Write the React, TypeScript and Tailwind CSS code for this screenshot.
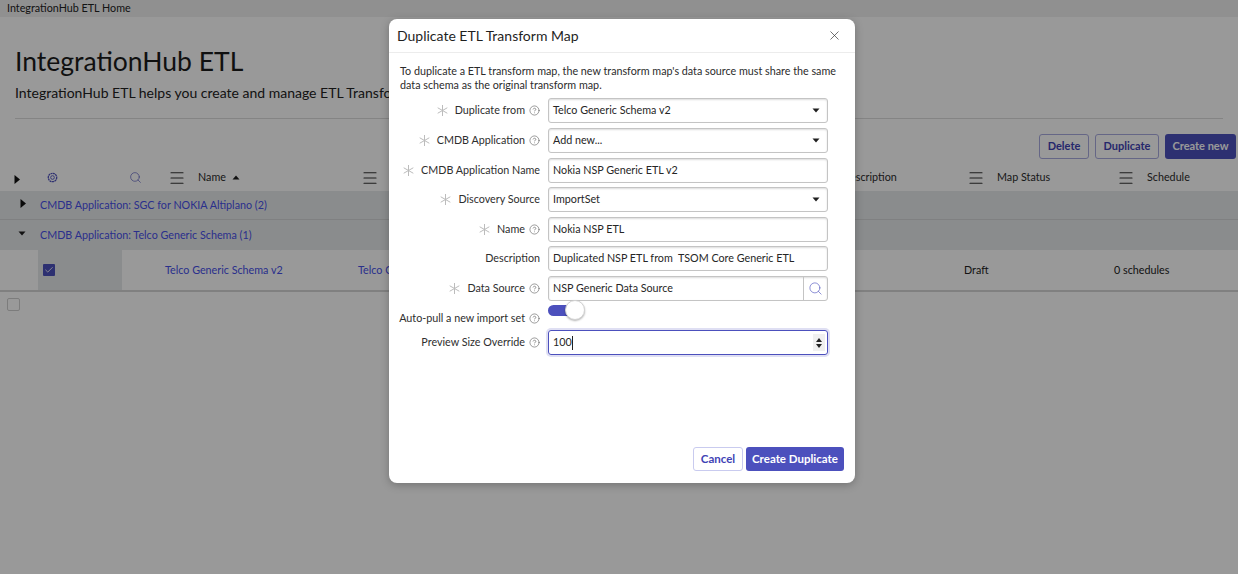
import { CircleHelp, Check, Menu, Search, X } from "lucide-react";
import type { ReactNode } from "react";

const Burger = () => <Menu size={18} strokeWidth={1.5} className="text-[#333]" />;

const Caret = ({ down = false }: { down?: boolean }) => (
  <svg width="8" height="5" viewBox="0 0 8 5" className={down ? "" : "rotate-180"}>
    <path d="M0.5 0.5h7L4 4.5z" fill="#1f1f1f" />
  </svg>
);

const SideArrow = () => (
  <svg width="6" height="9" viewBox="0 0 6 9">
    <path d="M0.5 0v9L6 4.5z" fill="#111" />
  </svg>
);

function Gear() {
  return (
    <svg width="11" height="11" viewBox="0 0 12 12" fill="none" stroke="#4f52bd" strokeWidth="1">
      <circle cx="6" cy="6" r="2" />
      <circle cx="6" cy="6" r="4.6" strokeDasharray="2.2 0.5" strokeWidth="1.4" />
    </svg>
  );
}

const Star = () => (
  <svg width="11" height="11" viewBox="0 0 11 11" stroke="#bcbcbc" strokeWidth="1" className="mr-[7px] shrink-0">
    <path d="M5.5 0v11M0.7 2.75l9.6 5.5M0.7 8.25l9.6-5.5" />
  </svg>
);

function Row({
  label,
  required,
  help,
  className,
  children,
}: {
  label: string;
  required?: boolean;
  help?: boolean;
  className: string;
  children: ReactNode;
}) {
  return (
    <div className={`flex items-center ${className}`}>
      <div className="w-[140px] h-full flex items-center justify-end shrink-0 text-[10.75px] text-[#2e2e2e] whitespace-nowrap">
        {required && <Star />}
        <span>{label}</span>
        {help && <CircleHelp size={11} strokeWidth={1.25} className="ml-[4px] text-[#555] shrink-0" />}
      </div>
      <div className="ml-[8px] w-[280px]">{children}</div>
    </div>
  );
}

function Field({ children, select }: { children?: ReactNode; select?: boolean }) {
  return (
    <div className="h-[25px] w-full flex items-center justify-between rounded-[3px] border border-[#c4c4c4] pl-[4px] pr-[7px] text-[10.75px] text-[#262626] bg-white shadow-[inset_0_1px_2px_rgba(0,0,0,0.14)]">
      <span className="whitespace-pre">{children}</span>
      {select && <Caret down />}
    </div>
  );
}

export default function App() {
  return (
    <div className="relative h-screen w-full overflow-hidden bg-white font-['Lato','Liberation_Sans',sans-serif] text-[#222]">
      {/* Page beneath the dialog */}
      <div className="h-[17px] bg-[#f0f0f0] flex items-center pl-[7px] text-[10.75px] text-[#222]">IntegrationHub ETL Home</div>
      <div className="px-[15px] pt-[24px]">
        <h1 className="text-[26.5px] leading-[40px] text-[#1c1c1c]">IntegrationHub ETL</h1>
        <p className="text-[14px] leading-[24px] whitespace-nowrap">IntegrationHub ETL helps you create and manage ETL Transform Maps</p>
      </div>
      <div className="mt-[13px] mx-[15px] border-t border-[#dcdcdc]" />
      <div className="mt-[15px] h-[25px] flex justify-end gap-[6px] pr-[2px] text-[11px] font-bold">
        <button className="w-[50px] rounded-[3px] border border-[#a9abe0] text-[#3f43b5]">Delete</button>
        <button className="w-[64px] rounded-[3px] border border-[#a9abe0] text-[#3f43b5]">Duplicate</button>
        <button className="w-[71px] rounded-[3px] bg-[#4c50bd] text-white">Create new</button>
      </div>
      <div className="h-[32px] pt-[5px] flex items-center text-[10.75px] text-[#2b2b2b]">
        <div className="w-[38px] pl-[14px] pt-[3px]"><SideArrow /></div>
        <div className="w-[84px] pl-[9px]"><Gear /></div>
        <div className="w-[43px] pl-[7px]"><Search size={13} strokeWidth={1.25} className="text-[#5a5dc0]" /></div>
        <div className="w-[193px] flex items-center pl-[3px]"><Burger /><span className="ml-[12px]">Name</span><span className="ml-[6px]"><Caret /></span></div>
        <div className="w-[193px] pl-[3px]"><Burger /></div>
        <div className="w-[258px]" />
        <div className="w-[155px] flex items-center pl-[3px]"><Burger /><span className="ml-[12px]">Description</span></div>
        <div className="w-[150px] flex items-center pl-[3px]"><Burger /><span className="ml-[12px]">Map Status</span></div>
        <div className="flex-1 flex items-center pl-[3px]"><Burger /><span className="ml-[12px]">Schedule</span></div>
      </div>
      <div className="h-[29px] bg-[#e6e9eb] border-b border-[#d4d6d8] flex items-center text-[10.75px] text-[#4650ea]">
        <div className="w-[40px] pl-[20px] pb-[3px]"><SideArrow /></div>
        <span>CMDB Application: SGC for NOKIA Altiplano (2)</span>
      </div>
      <div className="h-[30px] bg-[#e6e9eb] flex items-center text-[10.75px] text-[#4650ea]">
        <div className="w-[40px] pl-[18px] pb-[4px]"><Caret down /></div>
        <span>CMDB Application: Telco Generic Schema (1)</span>
      </div>
      <div className="h-[42px] flex items-stretch border-b-2 border-[#d6d6d6] text-[10.75px]">
        <div className="w-[38px]" />
        <div className="w-[84px] bg-[#e6e9eb] flex items-center pl-[5px]">
          <span className="w-[12px] h-[12px] rounded-[1px] bg-[#4c50bd] flex items-center justify-center">
            <Check size={10} strokeWidth={2} className="text-white" />
          </span>
        </div>
        <div className="w-[43px]" />
        <div className="w-[193px] flex items-center text-[#4650ea]">Telco Generic Schema v2</div>
        <div className="w-[193px] flex items-center text-[#4650ea]">Telco Generic Schema</div>
        <div className="w-[413px]" />
        <div className="w-[150px] flex items-center">Draft</div>
        <div className="flex-1 flex items-center">0 schedules</div>
      </div>
      <div className="mt-[6px] ml-[7px] w-[13px] h-[13px] rounded-[2px] border border-[#cfcfcf]" />

      {/* Scrim and dialog */}
      <div className="absolute inset-0 bg-black/40 flex items-start pt-[19px] pl-[389px]">
        <div className="w-[466px] h-[464px] rounded-[8px] bg-white shadow-[0_2px_8px_rgba(0,0,0,0.25)] flex flex-col">
          <div className="h-[34px] shrink-0 border-b border-[#ececec] flex items-center justify-between pl-[8px] pr-[13px]">
            <span className="text-[14px] text-[#1f1f1f]">Duplicate ETL Transform Map</span>
            <X size={15} strokeWidth={1.1} className="text-[#333]" />
          </div>
          <p className="mt-[11px] pl-[11px] pr-[10px] text-[10.75px] leading-[14px] text-[#2b2b2b]">
            To duplicate a ETL transform map, the new transform map's data source must share the same data schema as the original transform map.
          </p>
          <div className="mt-[6px] pl-[11px] flex flex-col">
            <Row label="Duplicate from" required help className="h-[25px]"><Field select>Telco Generic Schema v2</Field></Row>
            <Row label="CMDB Application" required help className="h-[25px] mt-[5px]"><Field select>Add new...</Field></Row>
            <Row label="CMDB Application Name" required className="h-[25px] mt-[5px]"><Field>Nokia NSP Generic ETL v2</Field></Row>
            <Row label="Discovery Source" required className="h-[25px] mt-[4px]"><Field select>ImportSet</Field></Row>
            <Row label="Name" required help className="h-[25px] mt-[5px]"><Field>Nokia NSP ETL</Field></Row>
            <Row label="Description" className="h-[25px] mt-[4px]"><Field>Duplicated NSP ETL from  TSOM Core Generic ETL</Field></Row>
            <Row label="Data Source" required help className="h-[25px] mt-[5px]">
              <div className="h-[25px] flex rounded-[3px] border border-[#c4c4c4] text-[10.75px] text-[#262626] shadow-[inset_0_1px_2px_rgba(0,0,0,0.14)]">
                <span className="flex-1 pl-[4px] flex items-center">NSP Generic Data Source</span>
                <span className="w-[24px] border-l border-[#c4c4c4] flex items-center justify-center">
                  <Search size={15} strokeWidth={1} className="text-[#4c50bd]" />
                </span>
              </div>
            </Row>
            <Row label="Auto-pull a new import set" help className="h-[24px] mt-[2px] pt-[6px]">
              <div className="relative h-[11px] w-[30px] -mt-[13px] rounded-full bg-[#4c50bd]">
                <span className="absolute -right-[7px] -top-[5px] w-[20px] h-[20px] rounded-full bg-white border border-[#d2d2d2] shadow-[0_1px_2px_rgba(0,0,0,0.3)]" />
              </div>
            </Row>
            <Row label="Preview Size Override" help className="h-[25px] mt-[3px]">
              <div className="h-[25px] flex items-center justify-between rounded-[3px] border border-[#4c50bd] pl-[4px] pr-[2px] text-[10.75px] text-[#262626] shadow-[0_0_0_2px_rgba(76,80,189,0.18)]">
                <span className="flex items-center">100<span className="w-px h-[14px] bg-[#222]" /></span>
                <span className="w-[12px] h-[17px] bg-[#f0f0f0] flex flex-col items-center justify-center gap-[2px]">
                  <svg width="6" height="4" viewBox="0 0 6 4"><path d="M0 4L3 0l3 4z" fill="#222" /></svg>
                  <svg width="6" height="4" viewBox="0 0 6 4"><path d="M0 0l3 4 3-4z" fill="#222" /></svg>
                </span>
              </div>
            </Row>
          </div>
          <div className="mt-auto mb-[12px] pr-[11px] flex justify-end gap-[3px] text-[11.5px] font-bold">
            <button className="w-[50px] h-[24px] rounded-[3px] border border-[#c9cbef] text-[#3f43b5]">Cancel</button>
            <button className="w-[98px] h-[24px] rounded-[3px] bg-[#4c50bd] text-white">Create Duplicate</button>
          </div>
        </div>
      </div>
    </div>
  );
}
